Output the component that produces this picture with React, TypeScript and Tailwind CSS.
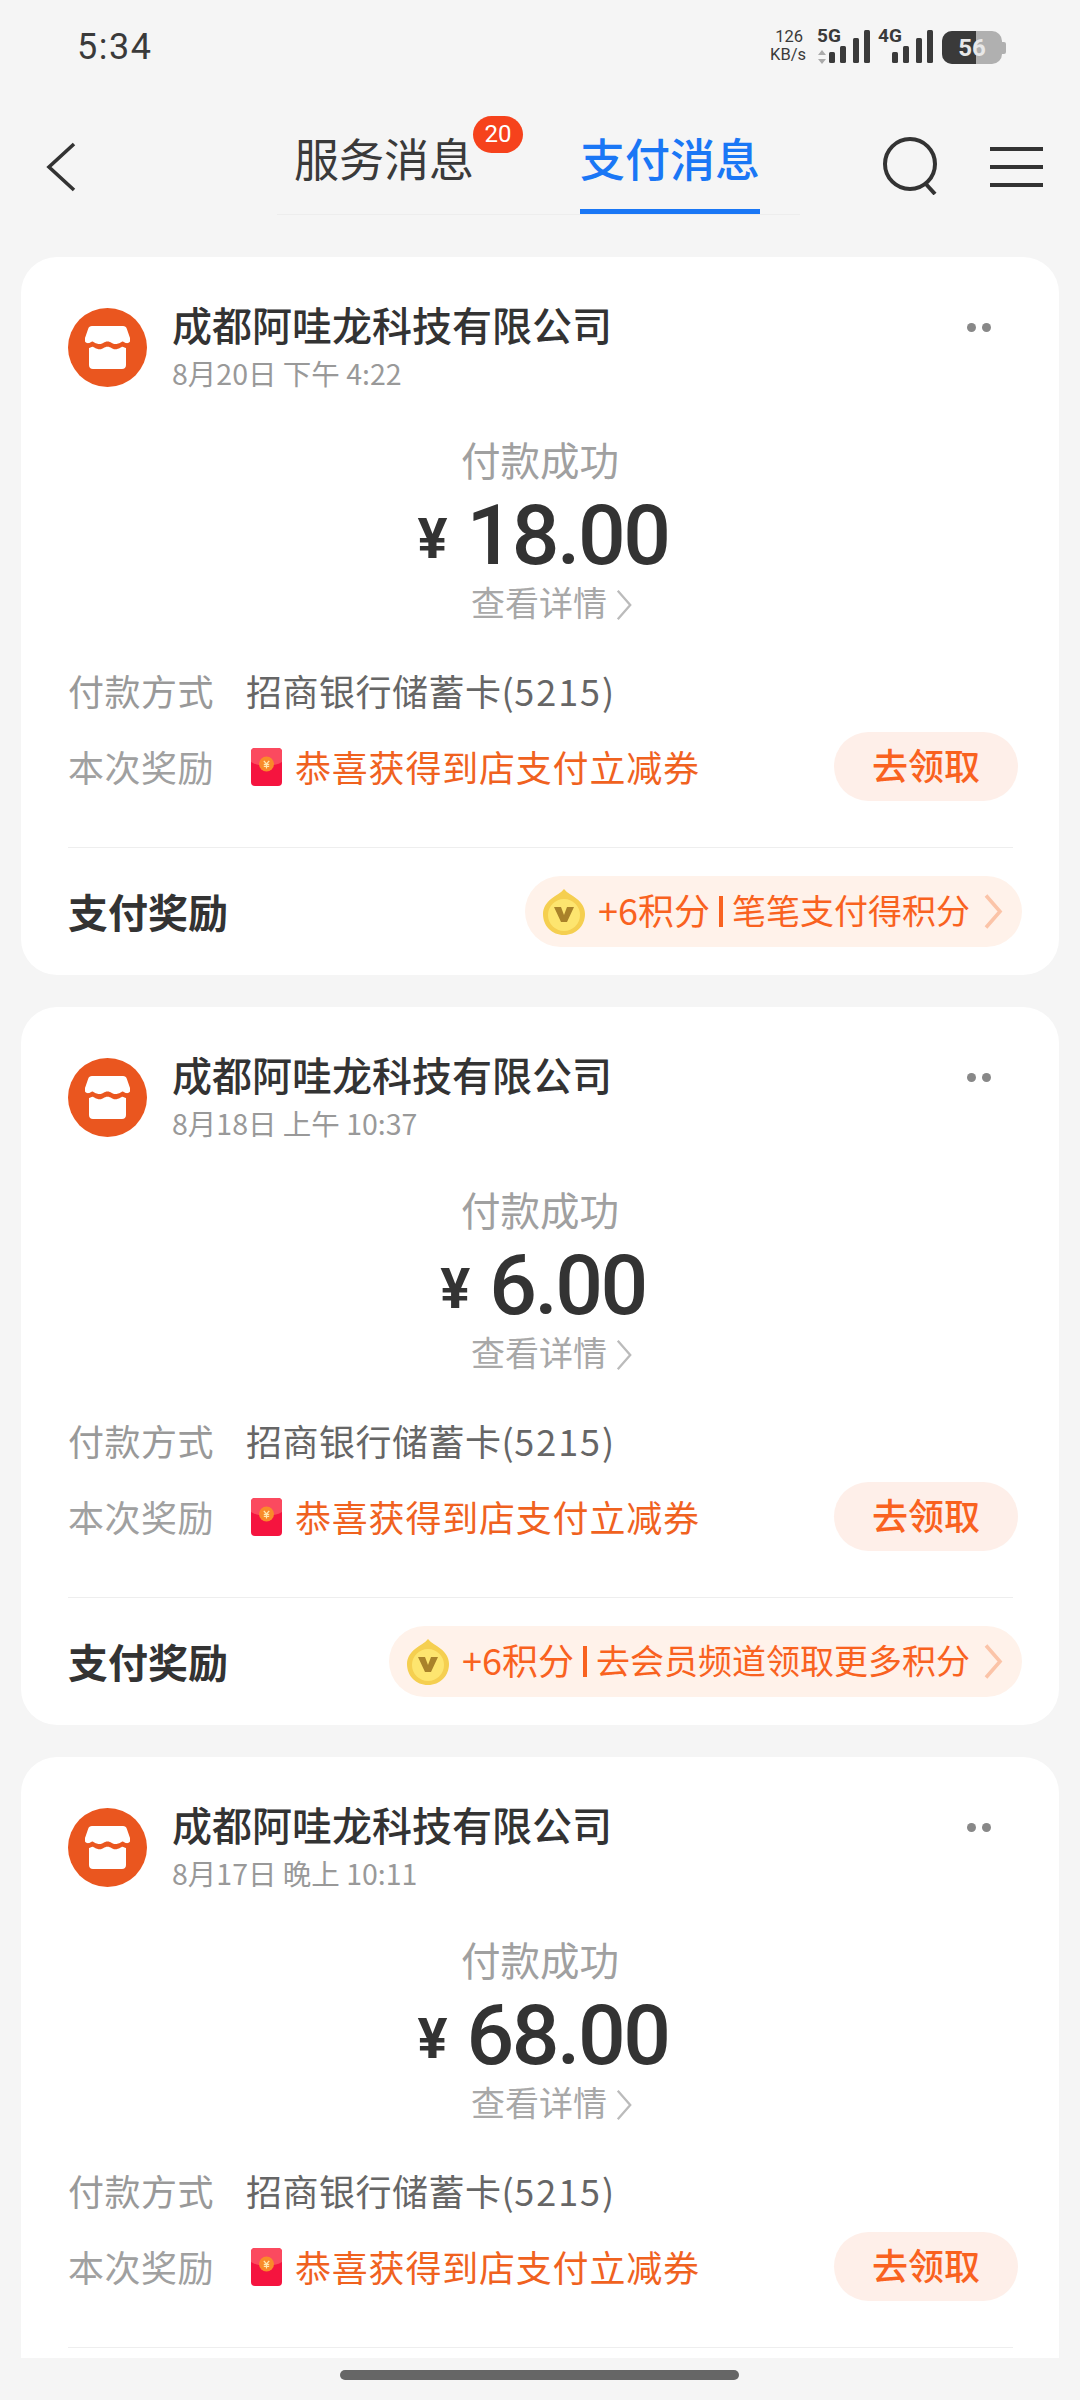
const cjk = 'font-["Noto_Sans_CJK_SC","Noto_Sans",sans-serif]';

const cards = [
  { date: '8月20日 下午 4:22', amount: '18.00', note: '笔笔支付得积分' },
  { date: '8月18日 上午 10:37', amount: '6.00', note: '去会员频道领取更多积分' },
  { date: '8月17日 晚上 10:11', amount: '68.00', note: '笔笔支付得积分' },
];

const Signal = () => (
  <svg width="50" height="34" viewBox="0 0 50 34" fill="#3a3a3a">
    <rect x="3" y="22" width="6" height="11" rx="1.5" />
    <rect x="14" y="16" width="6" height="17" rx="1.5" />
    <rect x="27" y="8" width="6" height="25" rx="1.5" />
    <rect x="38" y="0" width="6" height="33" rx="1.5" />
  </svg>
);

const StoreIcon = () => (
  <svg width="79" height="79" viewBox="0 0 79 79" className="shrink-0">
    <circle cx="39.5" cy="39.5" r="39.5" fill="#ea561f" />
    <path
      d="M24 18h31c2 0 3.200 1 3.800 2.800L62 30v3.500c-1 1.500-2.500 2-4 1.600-1.500-.5-2.500-1.600-3.500-1.600s-2.500 2.500-7.500 2.500c-3 0-4-2.500-7.500-2.500s-4.500 2.500-7.500 2.500c-5 0-6.500-2.500-7.500-2.500s-2 1.100-3.500 1.600c-1.500.4-3-.1-4-1.600V30l3.200-9.200C20.800 19 22 18 24 18z"
      fill="#fff"
    />
    <path
      d="M21 40c1.500-.2 2.500-1.300 3.500-1.300 1.500 0 3 2.500 7.500 2.500 3 0 4-2.500 7.500-2.500s4.500 2.500 7.500 2.500c4.500 0 6-2.500 7.500-2.500 1 0 2 1.100 3.500 1.300v17c0 2.500-1.500 4-4 4H25c-2.500 0-4-1.500-4-4z"
      fill="#fff"
    />
  </svg>
);

const RedPacket = () => (
  <svg width="31" height="38" viewBox="0 0 31 38" className="shrink-0">
    <rect width="31" height="38" rx="4" fill="#f5143f" />
    <path d="M0 4a4 4 0 0 1 4-4h23a4 4 0 0 1 4 4v10c-8 5-23 5-31 0z" fill="#fb4a5f" />
    <circle cx="15.500" cy="16" r="7.500" fill="#f98a2a" />
    <path d="M12.800 12.800l2.700 3.200 2.700-3.200M12.800 16.400h5.400M12.800 18.400h5.400M15.500 16v4.500" stroke="#ffe9b0" strokeWidth="1.200" fill="none" />
  </svg>
);

const Coin = () => (
  <svg width="42" height="46" viewBox="0 0 42 46" className="shrink-0">
    <path d="M21 0c3 4 8 6 13 10 5 4 8 9 8 15 0 12-9 21-21 21S0 37 0 25c0-6 3-11 8-15C13 6 18 4 21 0z" fill="#f5cf50" />
    <circle cx="21" cy="26" r="16" fill="#fde56f" />
    <path d="M11 18h7l3 8 3-8h7l-7 15h-6z" fill="#a9822a" />
  </svg>
);

const Chevron = ({ color, w, h, stroke }: { color: string; w: number; h: number; stroke: string }) => (
  <svg width={w} height={h} viewBox="0 0 20 36" fill="none" className="shrink-0">
    <path d="M3 2l14 16L3 34" stroke={color} strokeWidth={stroke} />
  </svg>
);

const Card = ({ date, amount, note }: { date: string; amount: string; note: string }) => (
  <div className="bg-white rounded-[36px] pt-[51px] pl-[47px] pr-[41px] pb-[28px] shrink-0">
    {/* Merchant */}
    <div className="flex items-start h-[79px]">
      <StoreIcon />
      <div className="ml-[25px] flex-1">
        <div className="h-[38px] leading-[32px] text-[40px] font-medium text-[#333]">成都阿哇龙科技有限公司</div>
        <div className="mt-[12px] h-[30px] leading-[30px] text-[28.5px] text-[#999]">{date}</div>
      </div>
      <div className="flex gap-[6px] mt-[15px] mr-[27px]">
        <span className="w-[9px] h-[9px] rounded-full bg-[#888]" />
        <span className="w-[9px] h-[9px] rounded-full bg-[#888]" />
      </div>
    </div>

    {/* Amount */}
    <div className="mt-[50px] mr-[6px] h-[44px] leading-[44px] text-center text-[39.5px] text-[#a0a0a0]">付款成功</div>
    <div className="mt-[13px] h-[84px] flex items-center justify-center text-[#333]">
      <span className="text-[56px] leading-[56px] font-bold font-['Roboto',sans-serif] mr-[19px] mt-[5px]">¥</span>
      <span className="text-[84px] leading-[84px] font-medium tracking-[-2.5px] font-['Roboto',sans-serif]">{amount}</span>
    </div>
    <div className="mt-[4px] ml-[19px] h-[40px] leading-[40px] flex items-center justify-center text-[34px] text-[#a8a8a8]">
      查看详情
      <span className="ml-[7px] mt-[6px]"><Chevron color="#bbb" w={20} h={32} stroke="2.600" /></span>
    </div>

    {/* Details */}
    <div className="mt-[49px] h-[44px] pb-[6px] flex items-center text-[36px] tracking-[0.5px]">
      <span className="w-[178px] text-[#999]">付款方式</span>
      <span className="text-[#666]">招商银行储蓄卡(<span className="tracking-[2px]">5215</span>)</span>
    </div>
    <div className="mt-[17px] h-[69px] flex items-center text-[36px] tracking-[0.8px]">
      <span className="w-[183px] pb-[2px] tracking-[0.5px] text-[#a0a0a0]">本次奖励</span>
      <RedPacket />
      <span className="ml-[13px] pb-[2px] text-[#f0621f] flex-1">恭喜获得到店支付立减券</span>
      <span className="w-[184px] h-[69px] pb-[5px] rounded-full bg-[#feefe9] flex items-center justify-center text-[#f9621f] font-medium tracking-normal">去领取</span>
    </div>
    <div className="mt-[46px] h-px bg-[#eeeeee] mr-[5px]" />

    {/* Rewards */}
    <div className="mt-[28px] h-[71px] flex items-center justify-between">
      <span className="text-[40px] pb-[2px] font-bold text-[#333]">支付奖励</span>
      <span className="h-[71px] mr-[-4px] pl-[18px] pr-[19px] rounded-full bg-[#fff2ea] flex items-center text-[34px] text-[#f9621f]">
        <Coin />
        <span className="ml-[13px] mr-[13px] pb-[5px] flex items-center">
          <span className="text-[36px]">+6积分</span>
          <span className="mx-[9px] w-[4px] h-[31px] mt-[5px] bg-[#f9621f]" />
          {note}
        </span>
        <Chevron color="#fbc4a8" w={20} h={37} stroke="3.600" />
      </span>
    </div>
  </div>
);

export default function App() {
  return (
    <div className={`relative w-[1080px] h-[2400px] bg-[#f5f5f5] overflow-hidden ${cjk}`}>
      {/* Status bar */}
      <div className="h-[100px] flex items-start justify-between pl-[77px] pr-[74px]">
        <span className="mt-[27px] text-[36px] leading-[40px] font-normal tracking-[1.5px] text-[#3a3a3a] font-['Roboto',sans-serif]">5:34</span>
        <div className="mt-[28px] flex items-end text-[#3a3a3a] font-['Roboto',sans-serif]">
          <div className="flex flex-col items-end text-[16.5px] leading-[18px] mr-[12px]">
            <span className="mr-[3px]">126</span>
            <span>KB/s</span>
          </div>
          <div className="relative w-[58px] h-[34px]">
            <span className="absolute left-[-1px] top-[-4px] text-[19px] leading-[20px] font-bold">5G</span>
            <svg width="8" height="14" viewBox="0 0 8 14" className="absolute left-[0px] bottom-0" fill="#aaa">
              <path d="M4 0l4 5H0zM4 14l4-5H0z" />
            </svg>
            <div className="absolute left-[8px] top-0"><Signal /></div>
          </div>
          <div className="relative w-[60px] h-[34px] ml-[3px]">
            <span className="absolute left-[-1px] top-[-4px] text-[19px] leading-[20px] font-bold">4G</span>
            <div className="absolute left-[10px] top-0"><Signal /></div>
          </div>
          <div className="relative w-[60px] h-[33px] ml-[3px] rounded-[10px] bg-[#b0b0b0] overflow-hidden">
            <div className="absolute left-0 top-0 w-[34px] h-full bg-[#3a3a3a]" />
            <span className="absolute inset-0 flex items-center justify-center text-[24px] font-bold text-[#e8e8e8]">56</span>
          </div>
          <div className="w-[4px] h-[12px] mb-[10px] rounded-r-[2px] bg-[#b0b0b0]" />
        </div>
      </div>

      {/* Header */}
      <div className="h-[115px] relative flex items-start px-[37px]">
        <div className="w-[240px] pt-[42px] pl-[9px]">
          <svg width="30" height="50" viewBox="0 0 30 50" fill="none">
            <path d="M28 2L3 25l25 23" stroke="#333" strokeWidth="3.600" />
          </svg>
        </div>
        <div className="relative w-[523px] h-[115px] border-b border-[#ededed]">
          <div className="flex h-[114px]">
            <span className="relative ml-[17px] mt-[33px] text-[45px] leading-[50px] text-[#3a3a3a]">
              服务消息
              <span className="absolute left-[179px] top-[-17px] w-[50px] h-[37px] rounded-full bg-[#f6421c] text-white text-[24px] leading-[37px] text-center font-['Roboto',sans-serif]">20</span>
            </span>
            <span className="relative ml-[106px] w-[180px] h-[114px] pt-[33px] text-[45px] leading-[50px] font-medium text-center text-[#1a77f5] border-b-[5px] border-[#1a77f5]">
              支付消息
            </span>
          </div>
        </div>
        <div className="flex-1 flex items-start justify-end pt-[37px] pr-[0px]">
          <svg width="58" height="58" viewBox="0 0 58 58" fill="none" className="mr-[50px]">
            <circle cx="28" cy="27" r="25" stroke="#333" strokeWidth="4" />
            <path d="M43 46l10 11" stroke="#333" strokeWidth="4" />
          </svg>
          <svg width="53" height="40" viewBox="0 0 53 40" className="mt-[10px]" fill="#333">
            <rect y="0" width="53" height="4" />
            <rect y="18" width="53" height="4" />
            <rect y="36" width="53" height="4" />
          </svg>
        </div>
      </div>

      {/* Messages */}
      <div className="mt-[42px] h-[2101px] overflow-hidden flex flex-col gap-[32px] mx-[21px]">
        {cards.map((card) => (
          <Card key={card.date} {...card} />
        ))}
      </div>

      {/* Home indicator */}
      <div className="absolute left-[340px] bottom-[20px] w-[399px] h-[10px] rounded-full bg-[#666]" />
    </div>
  );
}
